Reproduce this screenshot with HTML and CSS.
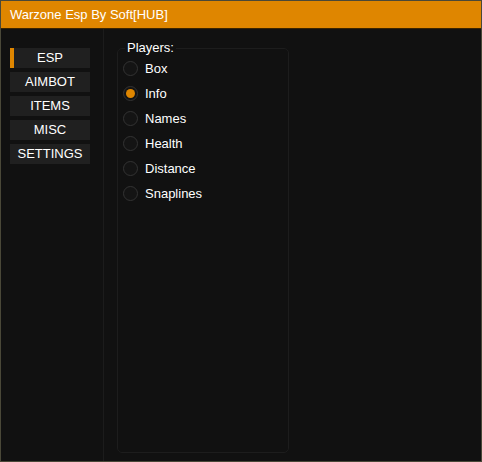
FILE: index.html
```html
<!DOCTYPE html>
<html>
<head>
<meta charset="utf-8">
<link rel="stylesheet" href="styles.css">
</head>
<body>
<div class="window">
  <div class="titlebar">Warzone Esp By Soft[HUB]</div>
  <div class="content">
    <div class="sidebar">
      <div class="tab active">ESP</div>
      <div class="tab">AIMBOT</div>
      <div class="tab">ITEMS</div>
      <div class="tab">MISC</div>
      <div class="tab">SETTINGS</div>
    </div>
    <div class="main">
      <fieldset class="group">
        <legend class="group-label">Players:</legend>
        <div class="radio first"><span class="dot"></span>Box</div>
        <div class="radio on"><span class="dot"></span>Info</div>
        <div class="radio"><span class="dot"></span>Names</div>
        <div class="radio"><span class="dot"></span>Health</div>
        <div class="radio"><span class="dot"></span>Distance</div>
        <div class="radio"><span class="dot"></span>Snaplines</div>
      </fieldset>
    </div>
  </div>
</div>
</body>
</html>
```

FILE: styles.css
```css
* { box-sizing: border-box; }
html, body {
  margin: 0;
  padding: 0;
  background: #44423a;
}
body {
  width: 482px;
  height: 462px;
  font-family: "Liberation Sans", "DejaVu Sans", sans-serif;
  font-size: 13px;
  color: #ffffff;
}
.window {
  width: 482px;
  height: 462px;
  border: 1px solid #4a4838;
  display: flex;
  flex-direction: column;
  background: #111111;
}
.titlebar {
  height: 28px;
  background: #df8600;
  border-bottom: 1px solid #3a2400;
  padding: 6px 0 0 9px;
  font-size: 13px;
  color: #ffffff;
  line-height: 15px;
}
.content {
  flex: 1;
  display: flex;
}
.sidebar {
  width: 103px;
  border-right: 1px solid #1c1c1c;
  padding: 19px 0 0 9px;
  display: flex;
  flex-direction: column;
  gap: 4px;
}
.tab {
  width: 80px;
  height: 20px;
  background: #202020;
  text-align: center;
  line-height: 20px;
  font-size: 13px;
  color: #ffffff;
}
.tab.active {
  border-left: 4px solid #df8600;
  padding-right: 4px;
}
.main {
  flex: 1;
  padding: 12px 0 0 13px;
}
.group {
  margin: 0;
  width: 172px;
  height: 412px;
  border: 1px solid #1d1d1d;
  border-radius: 5px;
  padding: 0 0 0 5px;
}
.group-label {
  padding: 0 2px 0 2px;
  margin-left: 2px;
  font-size: 13px;
  line-height: 14px;
  color: #ffffff;
}
.radio {
  display: flex;
  align-items: center;
  height: 25px;
  gap: 7px;
  font-size: 13px;
}
.radio.first { margin-top: 1px; }
.dot {
  width: 15px;
  height: 15px;
  border-radius: 50%;
  border: 1px solid #333333;
  background: #141414;
  display: flex;
  align-items: center;
  justify-content: center;
}
.radio.on .dot::after {
  content: "";
  width: 9px;
  height: 9px;
  border-radius: 50%;
  background: #df8600;
}
```
